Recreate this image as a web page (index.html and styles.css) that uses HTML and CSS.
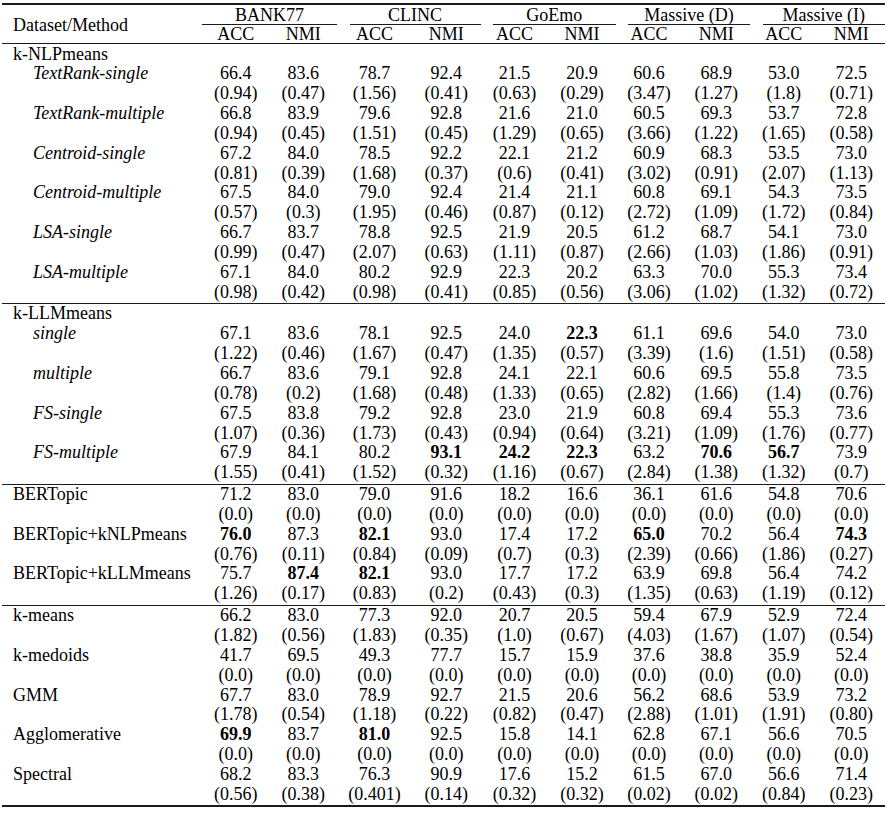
FILE: index.html
```html
<!DOCTYPE html>
<html lang="en">
<head>
<meta charset="utf-8">
<title>Clustering results</title>
<link rel="stylesheet" href="styles.css">
</head>
<body>
<div class="tbl">
  <div class="grid head">
    <div class="dm">Dataset/Method</div>
    <div class="grp"><span>BANK77</span></div>
    <div class="grp trim"><span>CLINC</span></div>
    <div class="grp trim"><span>GoEmo</span></div>
    <div class="grp trim"><span>Massive (D)</span></div>
    <div class="grp trim"><span>Massive (I)</span></div>
    <div class="sub">ACC</div><div class="sub">NMI</div>
    <div class="sub">ACC</div><div class="sub">NMI</div>
    <div class="sub">ACC</div><div class="sub">NMI</div>
    <div class="sub">ACC</div><div class="sub">NMI</div>
    <div class="sub">ACC</div><div class="sub">NMI</div>
  </div>

  <div class="sec">
    <div class="grid row"><div class="lab">k-NLPmeans</div><div></div><div></div><div></div><div></div><div></div><div></div><div></div><div></div><div></div><div></div></div>
    <div class="grid row"><div class="lab ind">TextRank-single</div><div>66.4</div><div>83.6</div><div>78.7</div><div>92.4</div><div>21.5</div><div>20.9</div><div>60.6</div><div>68.9</div><div>53.0</div><div>72.5</div></div>
    <div class="grid row"><div class="lab"></div><div>(0.94)</div><div>(0.47)</div><div>(1.56)</div><div>(0.41)</div><div>(0.63)</div><div>(0.29)</div><div>(3.47)</div><div>(1.27)</div><div>(1.8)</div><div>(0.71)</div></div>
    <div class="grid row"><div class="lab ind">TextRank-multiple</div><div>66.8</div><div>83.9</div><div>79.6</div><div>92.8</div><div>21.6</div><div>21.0</div><div>60.5</div><div>69.3</div><div>53.7</div><div>72.8</div></div>
    <div class="grid row"><div class="lab"></div><div>(0.94)</div><div>(0.45)</div><div>(1.51)</div><div>(0.45)</div><div>(1.29)</div><div>(0.65)</div><div>(3.66)</div><div>(1.22)</div><div>(1.65)</div><div>(0.58)</div></div>
    <div class="grid row"><div class="lab ind">Centroid-single</div><div>67.2</div><div>84.0</div><div>78.5</div><div>92.2</div><div>22.1</div><div>21.2</div><div>60.9</div><div>68.3</div><div>53.5</div><div>73.0</div></div>
    <div class="grid row"><div class="lab"></div><div>(0.81)</div><div>(0.39)</div><div>(1.68)</div><div>(0.37)</div><div>(0.6)</div><div>(0.41)</div><div>(3.02)</div><div>(0.91)</div><div>(2.07)</div><div>(1.13)</div></div>
    <div class="grid row"><div class="lab ind">Centroid-multiple</div><div>67.5</div><div>84.0</div><div>79.0</div><div>92.4</div><div>21.4</div><div>21.1</div><div>60.8</div><div>69.1</div><div>54.3</div><div>73.5</div></div>
    <div class="grid row"><div class="lab"></div><div>(0.57)</div><div>(0.3)</div><div>(1.95)</div><div>(0.46)</div><div>(0.87)</div><div>(0.12)</div><div>(2.72)</div><div>(1.09)</div><div>(1.72)</div><div>(0.84)</div></div>
    <div class="grid row"><div class="lab ind">LSA-single</div><div>66.7</div><div>83.7</div><div>78.8</div><div>92.5</div><div>21.9</div><div>20.5</div><div>61.2</div><div>68.7</div><div>54.1</div><div>73.0</div></div>
    <div class="grid row"><div class="lab"></div><div>(0.99)</div><div>(0.47)</div><div>(2.07)</div><div>(0.63)</div><div>(1.11)</div><div>(0.87)</div><div>(2.66)</div><div>(1.03)</div><div>(1.86)</div><div>(0.91)</div></div>
    <div class="grid row"><div class="lab ind">LSA-multiple</div><div>67.1</div><div>84.0</div><div>80.2</div><div>92.9</div><div>22.3</div><div>20.2</div><div>63.3</div><div>70.0</div><div>55.3</div><div>73.4</div></div>
    <div class="grid row"><div class="lab"></div><div>(0.98)</div><div>(0.42)</div><div>(0.98)</div><div>(0.41)</div><div>(0.85)</div><div>(0.56)</div><div>(3.06)</div><div>(1.02)</div><div>(1.32)</div><div>(0.72)</div></div>
  </div>

  <div class="sec">
    <div class="grid row"><div class="lab">k-LLMmeans</div><div></div><div></div><div></div><div></div><div></div><div></div><div></div><div></div><div></div><div></div></div>
    <div class="grid row"><div class="lab ind">single</div><div>67.1</div><div>83.6</div><div>78.1</div><div>92.5</div><div>24.0</div><div><b>22.3</b></div><div>61.1</div><div>69.6</div><div>54.0</div><div>73.0</div></div>
    <div class="grid row"><div class="lab"></div><div>(1.22)</div><div>(0.46)</div><div>(1.67)</div><div>(0.47)</div><div>(1.35)</div><div>(0.57)</div><div>(3.39)</div><div>(1.6)</div><div>(1.51)</div><div>(0.58)</div></div>
    <div class="grid row"><div class="lab ind">multiple</div><div>66.7</div><div>83.6</div><div>79.1</div><div>92.8</div><div>24.1</div><div>22.1</div><div>60.6</div><div>69.5</div><div>55.8</div><div>73.5</div></div>
    <div class="grid row"><div class="lab"></div><div>(0.78)</div><div>(0.2)</div><div>(1.68)</div><div>(0.48)</div><div>(1.33)</div><div>(0.65)</div><div>(2.82)</div><div>(1.66)</div><div>(1.4)</div><div>(0.76)</div></div>
    <div class="grid row"><div class="lab ind">FS-single</div><div>67.5</div><div>83.8</div><div>79.2</div><div>92.8</div><div>23.0</div><div>21.9</div><div>60.8</div><div>69.4</div><div>55.3</div><div>73.6</div></div>
    <div class="grid row"><div class="lab"></div><div>(1.07)</div><div>(0.36)</div><div>(1.73)</div><div>(0.43)</div><div>(0.94)</div><div>(0.64)</div><div>(3.21)</div><div>(1.09)</div><div>(1.76)</div><div>(0.77)</div></div>
    <div class="grid row"><div class="lab ind">FS-multiple</div><div>67.9</div><div>84.1</div><div>80.2</div><div><b>93.1</b></div><div><b>24.2</b></div><div><b>22.3</b></div><div>63.2</div><div><b>70.6</b></div><div><b>56.7</b></div><div>73.9</div></div>
    <div class="grid row"><div class="lab"></div><div>(1.55)</div><div>(0.41)</div><div>(1.52)</div><div>(0.32)</div><div>(1.16)</div><div>(0.67)</div><div>(2.84)</div><div>(1.38)</div><div>(1.32)</div><div>(0.7)</div></div>
  </div>

  <div class="sec">
    <div class="grid row"><div class="lab">BERTopic</div><div>71.2</div><div>83.0</div><div>79.0</div><div>91.6</div><div>18.2</div><div>16.6</div><div>36.1</div><div>61.6</div><div>54.8</div><div>70.6</div></div>
    <div class="grid row"><div class="lab"></div><div>(0.0)</div><div>(0.0)</div><div>(0.0)</div><div>(0.0)</div><div>(0.0)</div><div>(0.0)</div><div>(0.0)</div><div>(0.0)</div><div>(0.0)</div><div>(0.0)</div></div>
    <div class="grid row"><div class="lab">BERTopic+kNLPmeans</div><div><b>76.0</b></div><div>87.3</div><div><b>82.1</b></div><div>93.0</div><div>17.4</div><div>17.2</div><div><b>65.0</b></div><div>70.2</div><div>56.4</div><div><b>74.3</b></div></div>
    <div class="grid row"><div class="lab"></div><div>(0.76)</div><div>(0.11)</div><div>(0.84)</div><div>(0.09)</div><div>(0.7)</div><div>(0.3)</div><div>(2.39)</div><div>(0.66)</div><div>(1.86)</div><div>(0.27)</div></div>
    <div class="grid row"><div class="lab">BERTopic+kLLMmeans</div><div>75.7</div><div><b>87.4</b></div><div><b>82.1</b></div><div>93.0</div><div>17.7</div><div>17.2</div><div>63.9</div><div>69.8</div><div>56.4</div><div>74.2</div></div>
    <div class="grid row"><div class="lab"></div><div>(1.26)</div><div>(0.17)</div><div>(0.83)</div><div>(0.2)</div><div>(0.43)</div><div>(0.3)</div><div>(1.35)</div><div>(0.63)</div><div>(1.19)</div><div>(0.12)</div></div>
  </div>

  <div class="sec">
    <div class="grid row"><div class="lab">k-means</div><div>66.2</div><div>83.0</div><div>77.3</div><div>92.0</div><div>20.7</div><div>20.5</div><div>59.4</div><div>67.9</div><div>52.9</div><div>72.4</div></div>
    <div class="grid row"><div class="lab"></div><div>(1.82)</div><div>(0.56)</div><div>(1.83)</div><div>(0.35)</div><div>(1.0)</div><div>(0.67)</div><div>(4.03)</div><div>(1.67)</div><div>(1.07)</div><div>(0.54)</div></div>
    <div class="grid row"><div class="lab">k-medoids</div><div>41.7</div><div>69.5</div><div>49.3</div><div>77.7</div><div>15.7</div><div>15.9</div><div>37.6</div><div>38.8</div><div>35.9</div><div>52.4</div></div>
    <div class="grid row"><div class="lab"></div><div>(0.0)</div><div>(0.0)</div><div>(0.0)</div><div>(0.0)</div><div>(0.0)</div><div>(0.0)</div><div>(0.0)</div><div>(0.0)</div><div>(0.0)</div><div>(0.0)</div></div>
    <div class="grid row"><div class="lab">GMM</div><div>67.7</div><div>83.0</div><div>78.9</div><div>92.7</div><div>21.5</div><div>20.6</div><div>56.2</div><div>68.6</div><div>53.9</div><div>73.2</div></div>
    <div class="grid row"><div class="lab"></div><div>(1.78)</div><div>(0.54)</div><div>(1.18)</div><div>(0.22)</div><div>(0.82)</div><div>(0.47)</div><div>(2.88)</div><div>(1.01)</div><div>(1.91)</div><div>(0.80)</div></div>
    <div class="grid row"><div class="lab">Agglomerative</div><div><b>69.9</b></div><div>83.7</div><div><b>81.0</b></div><div>92.5</div><div>15.8</div><div>14.1</div><div>62.8</div><div>67.1</div><div>56.6</div><div>70.5</div></div>
    <div class="grid row"><div class="lab"></div><div>(0.0)</div><div>(0.0)</div><div>(0.0)</div><div>(0.0)</div><div>(0.0)</div><div>(0.0)</div><div>(0.0)</div><div>(0.0)</div><div>(0.0)</div><div>(0.0)</div></div>
    <div class="grid row"><div class="lab">Spectral</div><div>68.2</div><div>83.3</div><div>76.3</div><div>90.9</div><div>17.6</div><div>15.2</div><div>61.5</div><div>67.0</div><div>56.6</div><div>71.4</div></div>
    <div class="grid row"><div class="lab"></div><div>(0.56)</div><div>(0.38)</div><div>(0.401)</div><div>(0.14)</div><div>(0.32)</div><div>(0.32)</div><div>(0.02)</div><div>(0.02)</div><div>(0.84)</div><div>(0.23)</div></div>
  </div>
</div>
</body>
</html>
```

FILE: styles.css
```css
html, body {
  margin: 0;
  padding: 0;
  background: #fff;
}

body {
  font-family: "Liberation Serif", "Times New Roman", serif;
  font-size: 18px;
  color: #000;
}

.tbl {
  margin: 3px 0 0 2px;
  width: 883px;
  border-top: 2px solid #1a1a1a;
  border-bottom: 2px solid #1a1a1a;
}

.grid {
  display: grid;
  grid-template-columns: 200px 67.5px 67.5px 75px 68.5px 68px 67px 67px 67.5px 67.5px 67.5px;
}

.head {
  padding-top: 1px;
  line-height: 18px;
  border-bottom: 1px solid #1a1a1a;
}

.dm {
  grid-row: 1 / span 2;
  align-self: center;
  padding-left: 11px;
  padding-top: 1px;
}

.grp {
  grid-column: span 2;
}

.grp.trim {
  padding-left: 12.5px;
}

.grp span {
  display: block;
  text-align: center;
  border-bottom: 1px solid #1a1a1a;
}

.sub {
  text-align: center;
}

.sec {
  padding: 0.5px 0;
}

.sec + .sec {
  border-top: 1px solid #1a1a1a;
}

.row {
  height: 19.85px;
  line-height: 19.85px;
}

.row > div {
  text-align: center;
  white-space: nowrap;
}

.row > .lab {
  text-align: left;
  padding-left: 11px;
}

.row > .lab.ind {
  padding-left: 31px;
  font-style: italic;
}

b {
  font-weight: bold;
}
```
